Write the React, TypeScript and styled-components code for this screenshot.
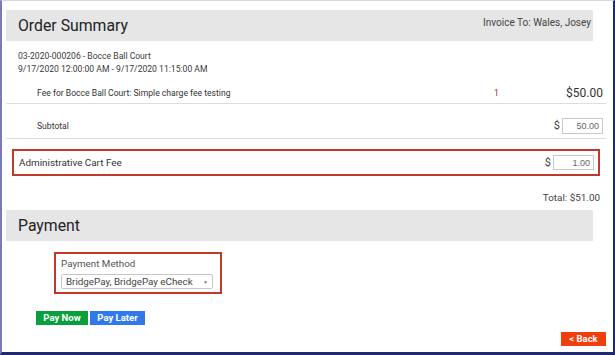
import React from "react";
import styled, { createGlobalStyle } from "styled-components";

const Global = createGlobalStyle`
  html, body { margin: 0; padding: 0; background: #fff; }
  body { font-family: Roboto, "Liberation Sans", Arial, sans-serif; color: #333; }
  * { box-sizing: border-box; }
`;

const Frame = styled.div`
  width: 615px;
  height: 355px;
  border-left: 2px solid #7a7ab4;
  border-right: 2px solid #1f2a6e;
  border-bottom: 3px solid #1f2a6e;
  border-top: 1px solid #d8d8e4;
  padding: 9px 7px 0 4px;
  display: flex;
  flex-direction: column;
  overflow: hidden;
`;

const SectionHeader = styled.div`
  height: 31px;
  margin-right: 13px;
  background: #e6e6e6;
  display: flex;
  align-items: center;
  justify-content: space-between;
  padding: 0 2px 0 12px;
`;

const Title = styled.h2`
  margin: 0;
  font-size: 15.8px;
  font-weight: 400;
  color: #222;
`;

const InvoiceTo = styled.span`
  font-size: 10px;
  color: #444;
  align-self: flex-start;
  margin-top: 7px;
`;

const ItemInfo = styled.div`
  font-size: 8.6px;
  line-height: 13px;
  color: #3a3a3a;
  padding: 9px 0 0 12px;
`;

const Row = styled.div<{ $h: number; $pt: number }>`
  display: flex;
  align-items: center;
  height: ${(p) => p.$h}px;
  border-bottom: 1px solid #ddd;
  padding: ${(p) => p.$pt}px 3px 0 31px;
  font-size: 8.6px;
  color: #333;
`;

const Label = styled.span`
  flex: 1;
`;

const Qty = styled.span`
  width: 72px;
  color: #8a3a2a;
  font-size: 8.6px;
`;

const Amount = styled.span`
  font-size: 12px;
  color: #333;
`;

const Dollar = styled.span`
  font-size: 11px;
  color: #444;
  margin-right: 2px;
`;

const AmountInput = styled.input<{ $h?: number }>`
  width: 41px;
  height: ${(p) => p.$h ?? 16}px;
  border: 1px solid #c8c8c8;
  font-family: "Liberation Sans", Arial, sans-serif;
  font-size: 9px;
  color: #666;
  text-align: right;
  padding: 0 3px;
  outline: none;
`;

const FeeBox = styled.div`
  margin: 10px 6px 0 6px;
  height: 27px;
  border: 2px solid #c0392b;
  display: flex;
  align-items: center;
  padding: 0 4px 0 5px;
  font-size: 9.9px;
  color: #333;
`;

const Total = styled.div`
  text-align: right;
  font-size: 9.9px;
  color: #444;
  padding-right: 6px;
  margin-top: 16px;
  margin-bottom: 7px;
`;

const MethodBox = styled.div`
  margin: 11px 0 0 48px;
  width: 168px;
  height: 42px;
  border: 2px solid #c0392b;
  padding: 3px 7px 0 5px;
`;

const MethodLabel = styled.div`
  font-size: 9.8px;
  color: #555;
  line-height: 13px;
  margin-bottom: 4px;
`;

const Select = styled.div`
  height: 15px;
  border: 1px solid #c8c8c8;
  border-radius: 2px;
  display: flex;
  align-items: center;
  justify-content: space-between;
  padding: 0 4px 0 4px;
  font-size: 9.8px;
  color: #444;
  white-space: nowrap;
`;

const Caret = styled.span`
  font-size: 5px;
  color: #777;
`;

const ButtonRow = styled.div`
  display: flex;
  gap: 2px;
  margin: 17px 0 0 30px;
`;

const Btn = styled.button<{ $bg: string; $w: number }>`
  width: ${(p) => p.$w}px;
  height: 14px;
  border: none;
  background: ${(p) => p.$bg};
  color: #fff;
  font-family: inherit;
  font-weight: 700;
  font-size: 9.5px;
  padding: 0;
  line-height: 14px;
  cursor: pointer;
`;

const BackRow = styled.div`
  display: flex;
  justify-content: flex-end;
  margin-top: 7px;
`;

export default function App() {
  return (
    <>
      <Global />
      <Frame>
        <SectionHeader>
          <Title>Order Summary</Title>
          <InvoiceTo>Invoice To: Wales, Josey</InvoiceTo>
        </SectionHeader>
        <ItemInfo>
          03-2020-000206 - Bocce Ball Court
          <br />
          9/17/2020 12:00:00 AM - 9/17/2020 11:15:00 AM
        </ItemInfo>
        <Row $h={28} $pt={7}>
          <Label>Fee for Bocce Ball Court: Simple charge fee testing</Label>
          <Qty>1</Qty>
          <Amount>$50.00</Amount>
        </Row>
        <Row $h={35} $pt={9}>
          <Label>Subtotal</Label>
          <Dollar>$</Dollar>
          <AmountInput readOnly value="50.00" />
        </Row>
        <FeeBox>
          <Label>Administrative Cart Fee</Label>
          <Dollar>$</Dollar>
          <AmountInput readOnly value="1.00" $h={15} />
        </FeeBox>
        <Total>Total: $51.00</Total>
        <SectionHeader>
          <Title>Payment</Title>
        </SectionHeader>
        <MethodBox>
          <MethodLabel>Payment Method</MethodLabel>
          <Select>
            <span>BridgePay, BridgePay eCheck</span>
            <Caret>▼</Caret>
          </Select>
        </MethodBox>
        <ButtonRow>
          <Btn $bg="#08a03c" $w={52}>Pay Now</Btn>
          <Btn $bg="#2f7ae8" $w={55}>Pay Later</Btn>
        </ButtonRow>
        <BackRow>
          <Btn $bg="#f23d0c" $w={45}>&lt; Back</Btn>
        </BackRow>
      </Frame>
    </>
  );
}
